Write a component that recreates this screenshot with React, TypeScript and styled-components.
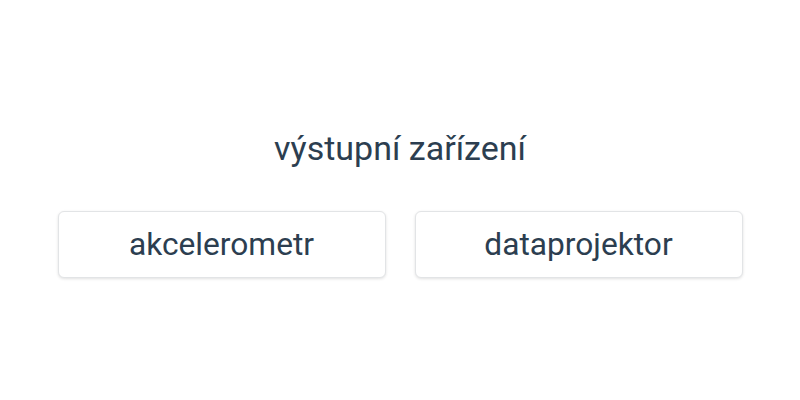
import React from "react";
import styled, { createGlobalStyle } from "styled-components";

const Global = createGlobalStyle`
  html, body { margin: 0; padding: 0; background: #fff; }
  body { font-family: Roboto, "Noto Sans", sans-serif; }
`;

const Page = styled.div`
  width: 800px;
  height: 400px;
  display: flex;
  flex-direction: column;
  align-items: center;
  justify-content: center;
  box-sizing: border-box;
  padding-top: 6px;
`;

const Title = styled.div`
  font-size: 34px;
  line-height: 40px;
  color: #2c3e50;
  margin-bottom: 43px;
`;

const Options = styled.div`
  display: grid;
  grid-template-columns: 328px 328px;
  gap: 29px;
`;

const Option = styled.button`
  height: 67px;
  background: #fff;
  border: 1px solid #e2e4e6;
  border-radius: 6px;
  box-shadow: 0 1px 3px rgba(0, 0, 0, 0.12);
  font-family: Roboto, "Noto Sans", sans-serif;
  font-size: 31.7px;
  color: #2c3e50;
  cursor: pointer;
  padding: 0;
`;

export default function App() {
  return (
    <>
      <Global />
      <Page>
        <Title>výstupní zařízení</Title>
        <Options>
          <Option>akcelerometr</Option>
          <Option>dataprojektor</Option>
        </Options>
      </Page>
    </>
  );
}
